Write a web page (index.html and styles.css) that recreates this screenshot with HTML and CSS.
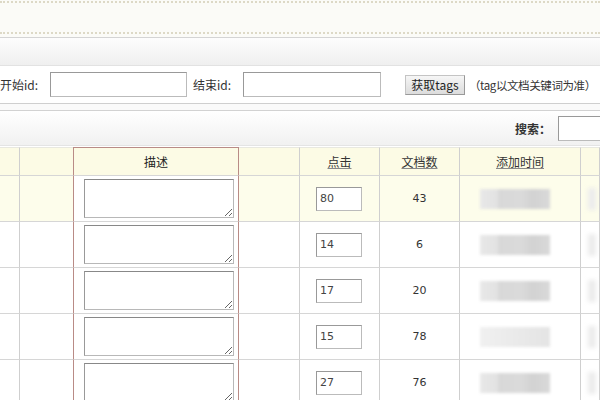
FILE: index.html
```html
<!DOCTYPE html>
<html lang="zh-CN">
<head>
    <meta charset="UTF-8">
    <title>标签管理</title>
    <link rel="stylesheet" href="styles.css">
</head>
<body>

    <div class="topbar"><div class="dots"></div></div>
    <div class="toolbar"></div>

    <div class="form-row">
        <span class="label">开始id:</span>
        <input type="text" class="id-input">
        <span class="label label-end">结束id:</span>
        <input type="text" class="id-input id-end">
        <button class="get-btn">获取tags</button>
        <span class="note">（tag以文档关键词为准）</span>
    </div>

    <div class="gap"></div>

    <div class="search-bar">
        <span class="search-label">搜索：</span>
        <input type="text" class="search-input">
    </div>

    <table class="tags">
        <colgroup>
            <col class="c1"><col class="c2"><col class="c3"><col class="c4">
            <col class="c5"><col class="c6"><col class="c7"><col class="c8">
        </colgroup>
        <tr class="head">
            <th></th><th class="pre"></th><th class="desc">描述</th><th></th>
            <th><a>点击</a></th><th><a>文档数</a></th><th><a>添加时间</a></th><th></th>
        </tr>
        <tr class="hover">
            <td></td><td class="pre"></td><td class="desc"><textarea></textarea></td><td></td>
            <td><input type="text" class="num" value="80"></td><td class="count">43</td>
            <td><div class="blur"></div></td><td><div class="faint"></div></td>
        </tr>
        <tr>
            <td></td><td class="pre"></td><td class="desc"><textarea></textarea></td><td></td>
            <td><input type="text" class="num" value="14"></td><td class="count">6</td>
            <td><div class="blur"></div></td><td><div class="faint"></div></td>
        </tr>
        <tr>
            <td></td><td class="pre"></td><td class="desc"><textarea></textarea></td><td></td>
            <td><input type="text" class="num" value="17"></td><td class="count">20</td>
            <td><div class="blur"></div></td><td><div class="faint"></div></td>
        </tr>
        <tr>
            <td></td><td class="pre"></td><td class="desc"><textarea></textarea></td><td></td>
            <td><input type="text" class="num" value="15"></td><td class="count">78</td>
            <td><div class="blur light"></div></td><td><div class="faint"></div></td>
        </tr>
        <tr>
            <td></td><td class="pre"></td><td class="desc"><textarea></textarea></td><td></td>
            <td><input type="text" class="num" value="27"></td><td class="count">76</td>
            <td><div class="blur"></div></td><td><div class="faint"></div></td>
        </tr>
    </table>

</body>
</html>
```

FILE: styles.css
```css
body { margin: 0; width: 600px; height: 400px; overflow: hidden; background: #fff; color: #222; font: 12px "Noto Sans CJK SC", "DejaVu Sans", sans-serif; }

.topbar { height: 38px; box-sizing: border-box; padding-top: 1px; background: #fbfbf7; border-bottom: 1px solid #d4d4d4; }
.dots { height: 29px; border-top: 2px dotted #ddd9c6; border-bottom: 2px dotted #ddd9c6; }
.toolbar { height: 27px; background: linear-gradient(#fdfdfd, #efefef); border-bottom: 1px solid #e2e2e2; }

.form-row { display: flex; align-items: center; height: 37px; border-bottom: 1px solid #cfcfcf; overflow: hidden; }
.form-row > * { flex: none; }
.label { width: 50px; color: #333; }
.label-end { margin-left: 6px; }
.id-input { width: 137px; height: 25px; box-sizing: border-box; border: 1px solid #bbb; border-top-color: #999; border-left-color: #999; margin: 0; }
.id-end { width: 138px; }
.get-btn { margin-left: 24px; width: 60px; height: 20px; padding: 0; font: 12px "Noto Sans CJK SC", sans-serif; color: #222; background: linear-gradient(#f6f6f6, #dcdcdc); border: 1px solid #c4c4c4; border-right-color: #999; border-bottom-color: #999; }
.note { margin-left: 4px; color: #333; white-space: nowrap; font-size: 11.5px; letter-spacing: -0.4px; }

.gap { height: 6px; background: #fafafa; border-bottom: 1px solid #d2d2d2; }

.search-bar { display: flex; align-items: center; justify-content: flex-end; height: 34px; background: linear-gradient(#fff, #f1f1f1); border-bottom: 1px solid #e4e4e4; }
.search-label { font-weight: bold; color: #333; margin-right: 7px; }
.search-input { width: 42px; height: 25px; box-sizing: border-box; border: 1px solid #bbb; border-right: none; border-top-color: #999; border-left-color: #999; margin: 0; }

.tags { margin-top: 1px; width: 600px; table-layout: fixed; border-collapse: separate; border-spacing: 0; }
.c1 { width: 20px; } .c2 { width: 53px; } .c3 { width: 166px; } .c4 { width: 61px; }
.c5 { width: 80px; } .c6 { width: 80px; } .c7 { width: 121px; } .c8 { width: 19px; }
.tags th, .tags td { border-right: 1px solid #cfcfcf; border-bottom: 1px solid #d6d6d6; padding: 0; text-align: center; overflow: hidden; }
.tags th { height: 27px; font-weight: normal; background: #fcfbe5; border-top: 1px solid #e8e8e0; }
.tags th a { color: #333; text-decoration: underline; text-decoration-color: #888; }
.tags td { height: 45px; }
.tags .pre { border-right: none; }
.tags .desc { border-left: 1px solid #b98b86; border-right: 1px solid #b98b86; background: #fff; }
.tags th.desc { border-top: 1px solid #b98b86; background: #fcfbe5; color: #222; }
.hover td { background: #fdfdeb; }
.hover td.desc { background: #fff; }

textarea { display: block; margin: 0 0 0 10px; width: 150px; height: 39px; box-sizing: border-box; border: 1px solid #b8b8b8; border-top-color: #888; border-left-color: #999; }
.num { display: block; margin-left: 16px; width: 46px; height: 24px; box-sizing: border-box; border: 1px solid #bbb; border-top-color: #999; border-left-color: #999; padding: 0 0 0 3px; font: 11px "DejaVu Sans", sans-serif; color: #444; }
.count { font: 11px "DejaVu Sans", sans-serif; color: #333; }

.blur { margin-left: 20px; width: 70px; height: 20px; background: linear-gradient(to right, #e8e8e8 0%, #e2e2e2 25%, #d8d8d8 26%, #dadada 60%, #d2d2d2 75%, #d9d9d9 100%); filter: blur(1.5px); }
.blur.light { background: linear-gradient(to right, #f0f0f0, #e4e4e4); }
.faint { margin-left: 7px; width: 8px; height: 22px; background: #ececec; filter: blur(2px); }
```
